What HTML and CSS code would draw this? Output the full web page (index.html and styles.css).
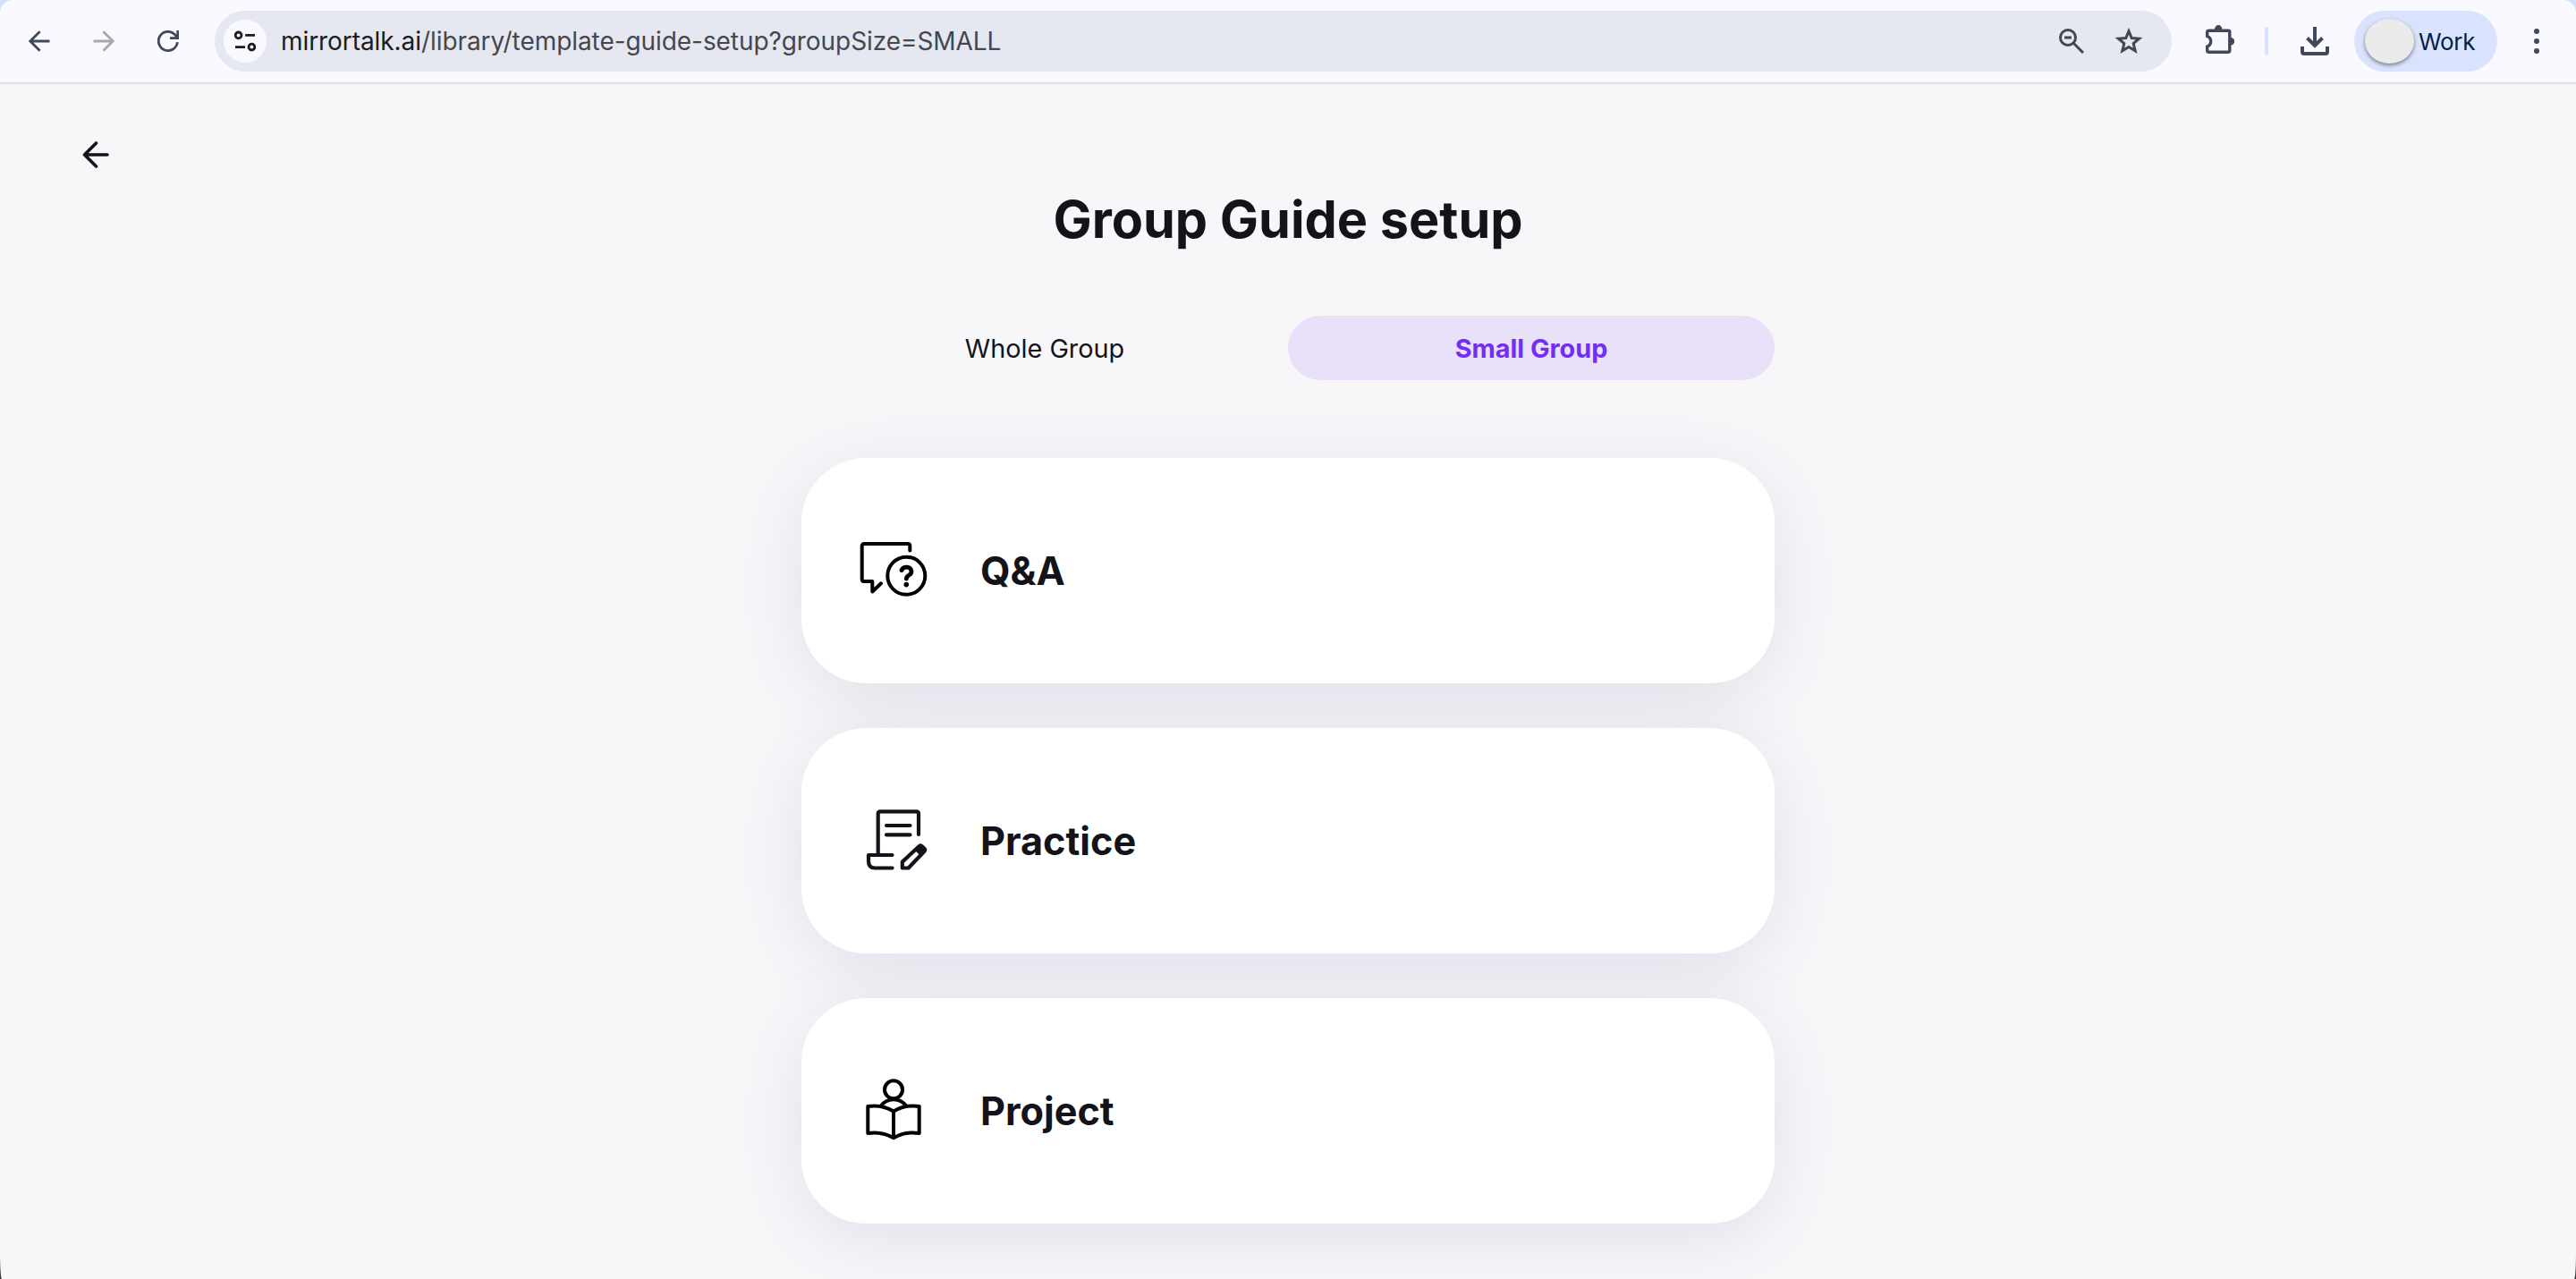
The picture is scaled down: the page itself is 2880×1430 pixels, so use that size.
FILE: index.html
```html
<!DOCTYPE html>
<html lang="en">
<head>
<meta charset="utf-8">
<title>Group Guide setup</title>
<link rel="stylesheet" href="styles.css">
</head>
<body>
<div class="window">
  <header class="toolbar">
    <svg class="icon nav-back" viewBox="0 0 24 24"><path d="M23.5 12H2M12.6 1.2 1.8 12l10.8 10.8"/></svg>
    <svg class="icon nav-forward" viewBox="0 0 24 24"><path d="M.5 12H22M11.4 1.2 22.2 12 11.4 22.8"/></svg>
    <svg class="icon nav-reload" viewBox="0 0 24 24"><path d="M22.4 13.2A10.6 10.6 0 1 1 19.3 4.4L22 7.5M22.7 0V8.6H14"/></svg>
    <div class="address">
      <span class="site-info">
        <svg viewBox="0 0 24 24"><circle cx="4.6" cy="5.4" r="3.4"/><path d="M12.2 5.4H23M1 18.6h11"/><circle cx="19.4" cy="18.6" r="3.4"/></svg>
      </span>
      <span class="url"><span class="host">mirrortalk.ai</span>/library/template-guide-setup?groupSize=SMALL</span>
      <svg class="zoom-icon" viewBox="0 0 28 28"><circle cx="10" cy="10" r="8.5"/><path d="M6 10h8M16 16l11 11"/></svg>
      <svg class="star-icon" viewBox="0 0 32 30"><path d="M16 3.7 19.2 11.5 27.6 12.2 21.2 17.6 23.2 25.8 16 21.4 8.8 25.8 10.8 17.6 4.4 12.2 12.8 11.5Z"/></svg>
    </div>
    <svg class="puzzle-icon" viewBox="0 0 32 32"><path class="line" d="M4.2 6.2H25.3Q26.8 6.2 26.8 7.7V28.6Q26.8 30.2 25.3 30.2H3.2Q1.7 30.2 1.7 28.6V24C7 22 7 14.500 1.700 12.500V7.7Q1.7 6.2 4.2 6.2Z"/><path class="fill" d="M10 5a4.200 5 0 0 1 8.400 0ZM28 14a4.200 4.200 0 0 1 0 8.400Z"/></svg>
    <span class="divider"></span>
    <svg class="download-icon" viewBox="0 0 32 32"><path d="M16 0V20.500M7.500 12.500 16 21l8.500-8.500M2 22v6q0 2 2 2H28q2 0 2-2V22"/></svg>
    <div class="profile"><span class="avatar"></span><span class="profile-name">Work</span></div>
    <svg class="menu-icon" viewBox="0 0 6 28"><circle cx="3" cy="3" r="3"/><circle cx="3" cy="14" r="3"/><circle cx="3" cy="25" r="3"/></svg>
  </header>
  <main class="page">
    <svg class="page-back" viewBox="0 0 30 30"><path d="M28 15H2.500M15.500 2 2.500 15l13 13"/></svg>
    <h1 class="title">Group Guide setup</h1>
    <nav class="tabs">
      <span class="tab">Whole Group</span>
      <span class="tab tab-active">Small Group</span>
    </nav>
    <section class="cards">
      <article class="card">
        <svg class="card-icon black" viewBox="0 0 80 80">
          <path d="M57.300 17.500V12.500Q57.300 10 54.800 10H6.200Q3.700 10 3.700 12.500V49.500Q3.700 52 6.200 52H15.300V63.500L25 54.300"/>
          <circle cx="53.300" cy="45.700" r="21"/>
          <path class="thick" d="M48 39.500C50 34.500 59.300 35 59 41.300C58.800 45.300 53.300 45 53.300 49.200"/>
          <circle class="dot" cx="53.300" cy="55.600" r="2.800"/>
        </svg>
        <h2 class="card-title">Q&amp;A</h2>
      </article>
      <article class="card">
        <svg class="card-icon" viewBox="0 0 80 80">
          <path d="M21.700 55V9.800Q21.700 7.400 24.200 7.400H64.500Q67 7.400 67 9.800V33M31 23H57.500M31 33.300H57.500M37.500 56H11V62.500Q11 70.500 18 70.500H37.500"/>
          <path d="M48.800 70.500V63.600L67.500 46.200Q69.200 44.700 71 46.400L73.400 48.700Q75 50.300 73.300 52L55.600 70.500Z"/>
          <path class="dot" d="M60.800 52 69.500 43.500 76 50.300 67.500 59V55.500L64.500 52.300Z"/>
        </svg>
        <h2 class="card-title">Practice</h2>
      </article>
      <article class="card">
        <svg class="card-icon black" viewBox="0 0 80 80">
          <circle cx="39" cy="16.300" r="10"/>
          <path d="M24.300 35Q30 27.200 39 27.200T53.700 35M39 40.500Q26 32.700 10.300 35V65Q26 62.500 39 70.300Q52 62.500 67.700 65V35Q52 32.700 39 40.500V70"/>
        </svg>
        <h2 class="card-title">Project</h2>
      </article>
    </section>
  </main>
</div>
</body>
</html>
```
FILE: styles.css
```css
* { box-sizing: border-box; }

body {
  margin: 0;
  background: linear-gradient(#d6dff8 50%, #303030 50%);
  font-family: Inter, "Liberation Sans", sans-serif;
  color: #15131a;
}

svg {
  flex: none;
  display: block;
  fill: none;
  stroke: currentColor;
}

.window {
  height: 1430px;
  overflow: hidden;
  background: #f7f7fa;
  border-radius: 15px 15px 2px 2px / 15px 15px 30px 30px;
}

/* Browser toolbar */
.toolbar {
  height: 94px;
  display: flex;
  align-items: center;
  padding-left: 32px;
  background: #faf9ff;
  border-bottom: 2px solid #dde2ee;
  color: #40485c;
}

.icon {
  width: 24px;
  height: 24px;
  stroke-width: 2.8;
}

.nav-forward { margin-left: 48px; color: #a9a8ae; }
.nav-reload { margin-left: 48px; }

.address {
  width: 2188px;
  height: 68px;
  margin-left: 40px;
  padding: 0 32px 0 10px;
  display: flex;
  align-items: center;
  border-radius: 34px;
  background: #e5e8f1;
  color: #46474c;
}

.site-info {
  width: 48px;
  height: 48px;
  display: flex;
  align-items: center;
  justify-content: center;
  border-radius: 50%;
  background: #faf9ff;
  color: #1c1b20;
}

.site-info svg { width: 24px; height: 24px; stroke-width: 2.8; }

.url {
  flex: 1;
  margin-left: 16px;
  font-size: 28px;
  line-height: 34px;
  letter-spacing: -.07px;
  white-space: nowrap;
}

.host { color: #1c1b20; }

.zoom-icon { width: 28px; height: 28px; stroke-width: 3; }
.star-icon { width: 32px; height: 30px; margin-left: 34px; stroke-width: 3; }
.puzzle-icon { width: 32px; height: 32px; margin: -4px 0 0 38px; }
.puzzle-icon .line { stroke-width: 3.4; }
.puzzle-icon .fill { fill: currentColor; stroke: none; }

.divider {
  width: 4px;
  height: 32px;
  margin-left: 34px;
  border-radius: 2px;
  background: #d9e3fd;
}

.download-icon { width: 32px; height: 32px; margin-left: 36px; stroke-width: 4; }

.profile {
  width: 160px;
  height: 68px;
  margin-left: 28px;
  padding-left: 12px;
  display: flex;
  align-items: center;
  border-radius: 34px;
  background: #d9e3fd;
  color: #071d45;
}

.avatar {
  width: 55px;
  height: 50px;
  border-radius: 50%;
  background: #ebebeb;
  box-shadow: 0 2px 4px rgba(0, 0, 0, .45);
}

.profile-name { margin-left: 5px; font-size: 26px; letter-spacing: -.3px; }

.menu-icon { width: 6px; height: 28px; margin-left: 41px; }
.menu-icon circle { fill: currentColor; stroke: none; }

/* Page */
.page { display: flex; flex-direction: column; align-items: center; }

.page-back {
  width: 30px;
  height: 30px;
  align-self: flex-start;
  margin: 64px 0 0 92px;
  stroke-width: 3.6;
  stroke-linecap: round;
  stroke-linejoin: round;
}

.title {
  margin: 21px 0 0;
  font-size: 57.6px;
  line-height: 72px;
  font-weight: 700;
}

.tabs { display: flex; width: 1088px; margin-top: 72px; }

.tab {
  flex: 1;
  height: 72px;
  border-radius: 36px;
  font-size: 28.8px;
  line-height: 73px;
  text-align: center;
}

.tab-active { background: #e9e0f9; color: #722ef5; font-weight: 700; }

.cards {
  width: 1088px;
  margin-top: 87px;
  display: flex;
  flex-direction: column;
  gap: 50px;
}

.card {
  height: 252px;
  padding-left: 64px;
  display: flex;
  align-items: center;
  gap: 56px;
  border-radius: 72px;
  background: #fff;
  box-shadow: 0 16px 80px rgba(72, 40, 105, .115);
}

.card-icon {
  width: 80px;
  height: 80px;
  stroke-width: 4.2;
  stroke-linecap: round;
  stroke-linejoin: round;
}

.black { color: #000; stroke-width: 4; }
.card-icon .thick { stroke-width: 4.800; }
.card-icon .dot { fill: currentColor; stroke: none; }

.card-title {
  margin: 0;
  font-size: 43.2px;
  line-height: 54px;
  font-weight: 700;
}
```
